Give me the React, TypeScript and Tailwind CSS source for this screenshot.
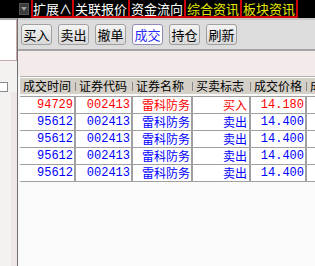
import React from "react";

const CJK = "font-['SimSun','Noto_Sans_CJK_SC',sans-serif]";
const MONO = "font-['Liberation_Mono','Noto_Sans_CJK_SC',monospace]";

const TABS = [
  { label: "扩展∧", w: "w-[41px]", color: "text-white" },
  { label: "关联报价", w: "w-[56px]", color: "text-white" },
  { label: "资金流向", w: "w-[56px]", color: "text-white" },
  { label: "综合资讯", w: "w-[56px]", color: "text-[#e8e800]" },
  { label: "板块资讯", w: "w-[56px]", color: "text-[#e8e800]" },
];

const BUTTONS = ["买入", "卖出", "撤单", "成交", "持仓", "刷新"];

const HEAD = ["成交时间", "证券代码", "证券名称", "买卖标志", "成交价格", "成交数量"];

const ROWS = [
  { time: "94729", code: "002413", name: "雷科防务", side: "买入", price: "14.180", buy: true },
  { time: "95612", code: "002413", name: "雷科防务", side: "卖出", price: "14.400", buy: false },
  { time: "95612", code: "002413", name: "雷科防务", side: "卖出", price: "14.400", buy: false },
  { time: "95612", code: "002413", name: "雷科防务", side: "卖出", price: "14.400", buy: false },
  { time: "95612", code: "002413", name: "雷科防务", side: "卖出", price: "14.400", buy: false },
];

const COLS = "grid grid-cols-[56px_57px_60px_58px_56px_40px]";
const CELL = "overflow-hidden whitespace-nowrap border-r-2 border-[#a0a0a0] text-right leading-[16px]";

function TopBar() {
  return (
    <div className="flex h-[18px] bg-black">
      <div className="w-[19px]" />
      <div className="mt-[3px] flex h-[12px] w-[10px] items-center justify-center border border-[#555] bg-[#3a3a3a]">
        <div className="h-0 w-0 border-x-[3px] border-t-[4px] border-x-transparent border-t-[#9a9a9a]" />
      </div>
      <div className="ml-[2px] flex h-[18px] border-b-2 border-l-2 border-[#d00000]">
        {TABS.map((t) => (
          <div
            key={t.label}
            className={`${t.w} ${t.color} ${CJK} flex items-center justify-center border-r-2 border-[#d00000] text-[13px] leading-none`}
          >
            {t.label}
          </div>
        ))}
      </div>
    </div>
  );
}

function Sidebar() {
  return (
    <div className="flex w-[18px] flex-col bg-[#f4f2f1]">
      <div className="h-[2px] bg-[#a8a8a8]" />
      <div className="h-[41px] w-[17px] border-b border-r border-[#c9a8a8] bg-white" />
      <div className="mt-[21px] h-[10px] w-[8px] border border-l-0 border-[#8a8a8a] bg-white" />
      <div className="ml-auto w-[6px] flex-1 bg-[#efe6e6]" />
    </div>
  );
}

function Toolbar() {
  return (
    <div className="flex h-[33px] items-center gap-[6px] border-t-2 border-b-2 border-t-[#c8c8c8] border-b-[#a4a4a4] bg-[#dcdcdc] pl-[3px]">
      {BUTTONS.map((b) => {
        const active = b === "成交";
        return (
          <div
            key={b}
            className={`${CJK} flex h-[21px] w-[31px] items-center justify-center rounded-[3px] border text-[13px] leading-none ${
              active
                ? "border-[#8c8cb4] bg-white text-[#2a2aff]"
                : "border-[#a0a0a0] bg-[linear-gradient(#f4f4f4,#d8d8d8)] text-black"
            }`}
          >
            {b}
          </div>
        );
      })}
    </div>
  );
}

function Table() {
  return (
    <div className="flex-1 bg-[#fafafa] pl-[2px]">
      <div className="border-t border-[#b0b0b0]">
        <div className={`${COLS} mt-[1px] h-[16px] bg-[#d4d0c8]`}>
          {HEAD.map((h) => (
            <div key={h} className={`${CJK} relative overflow-hidden whitespace-nowrap pl-[3px] text-[12px] leading-[16px] text-black`}>
              {h}
              <span className="absolute right-0 top-[4px] h-[9px] w-px bg-[#888]" />
            </div>
          ))}
        </div>
        <div className="mt-[2px] border-t border-[#a0a0a0]">
          {ROWS.map((r, i) => {
            const c = r.buy ? "text-[#ff0000]" : "text-[#0000ff]";
            return (
              <div key={i} className={`${COLS} h-[17px] border-b border-[#a0a0a0] bg-white`}>
                <div className={`${MONO} ${c} ${CELL} pr-[1px] text-[12px]`}>{r.time}</div>
                <div className={`${MONO} ${c} ${CELL} pr-[1px] text-[12px]`}>{r.code}</div>
                <div className={`${CJK} ${c} ${CELL} pr-[1px] text-[12px]`}>{r.name}</div>
                <div className={`${CJK} ${c} ${CELL} pr-[2px] text-[12px]`}>{r.side}</div>
                <div className={`${MONO} ${c} ${CELL} pr-[1px] text-[12px]`}>{r.price}</div>
                <div />
              </div>
            );
          })}
        </div>
      </div>
    </div>
  );
}

export default function App() {
  return (
    <div className="flex h-[266px] w-[315px] flex-col overflow-hidden bg-[#f4f2f1]">
      <TopBar />
      <div className="flex flex-1">
        <Sidebar />
        <div className="flex flex-1 flex-col border-l border-[#707070]">
          <Toolbar />
          <div className="h-[25px] bg-[#f3eaea]" />
          <Table />
        </div>
      </div>
    </div>
  );
}
